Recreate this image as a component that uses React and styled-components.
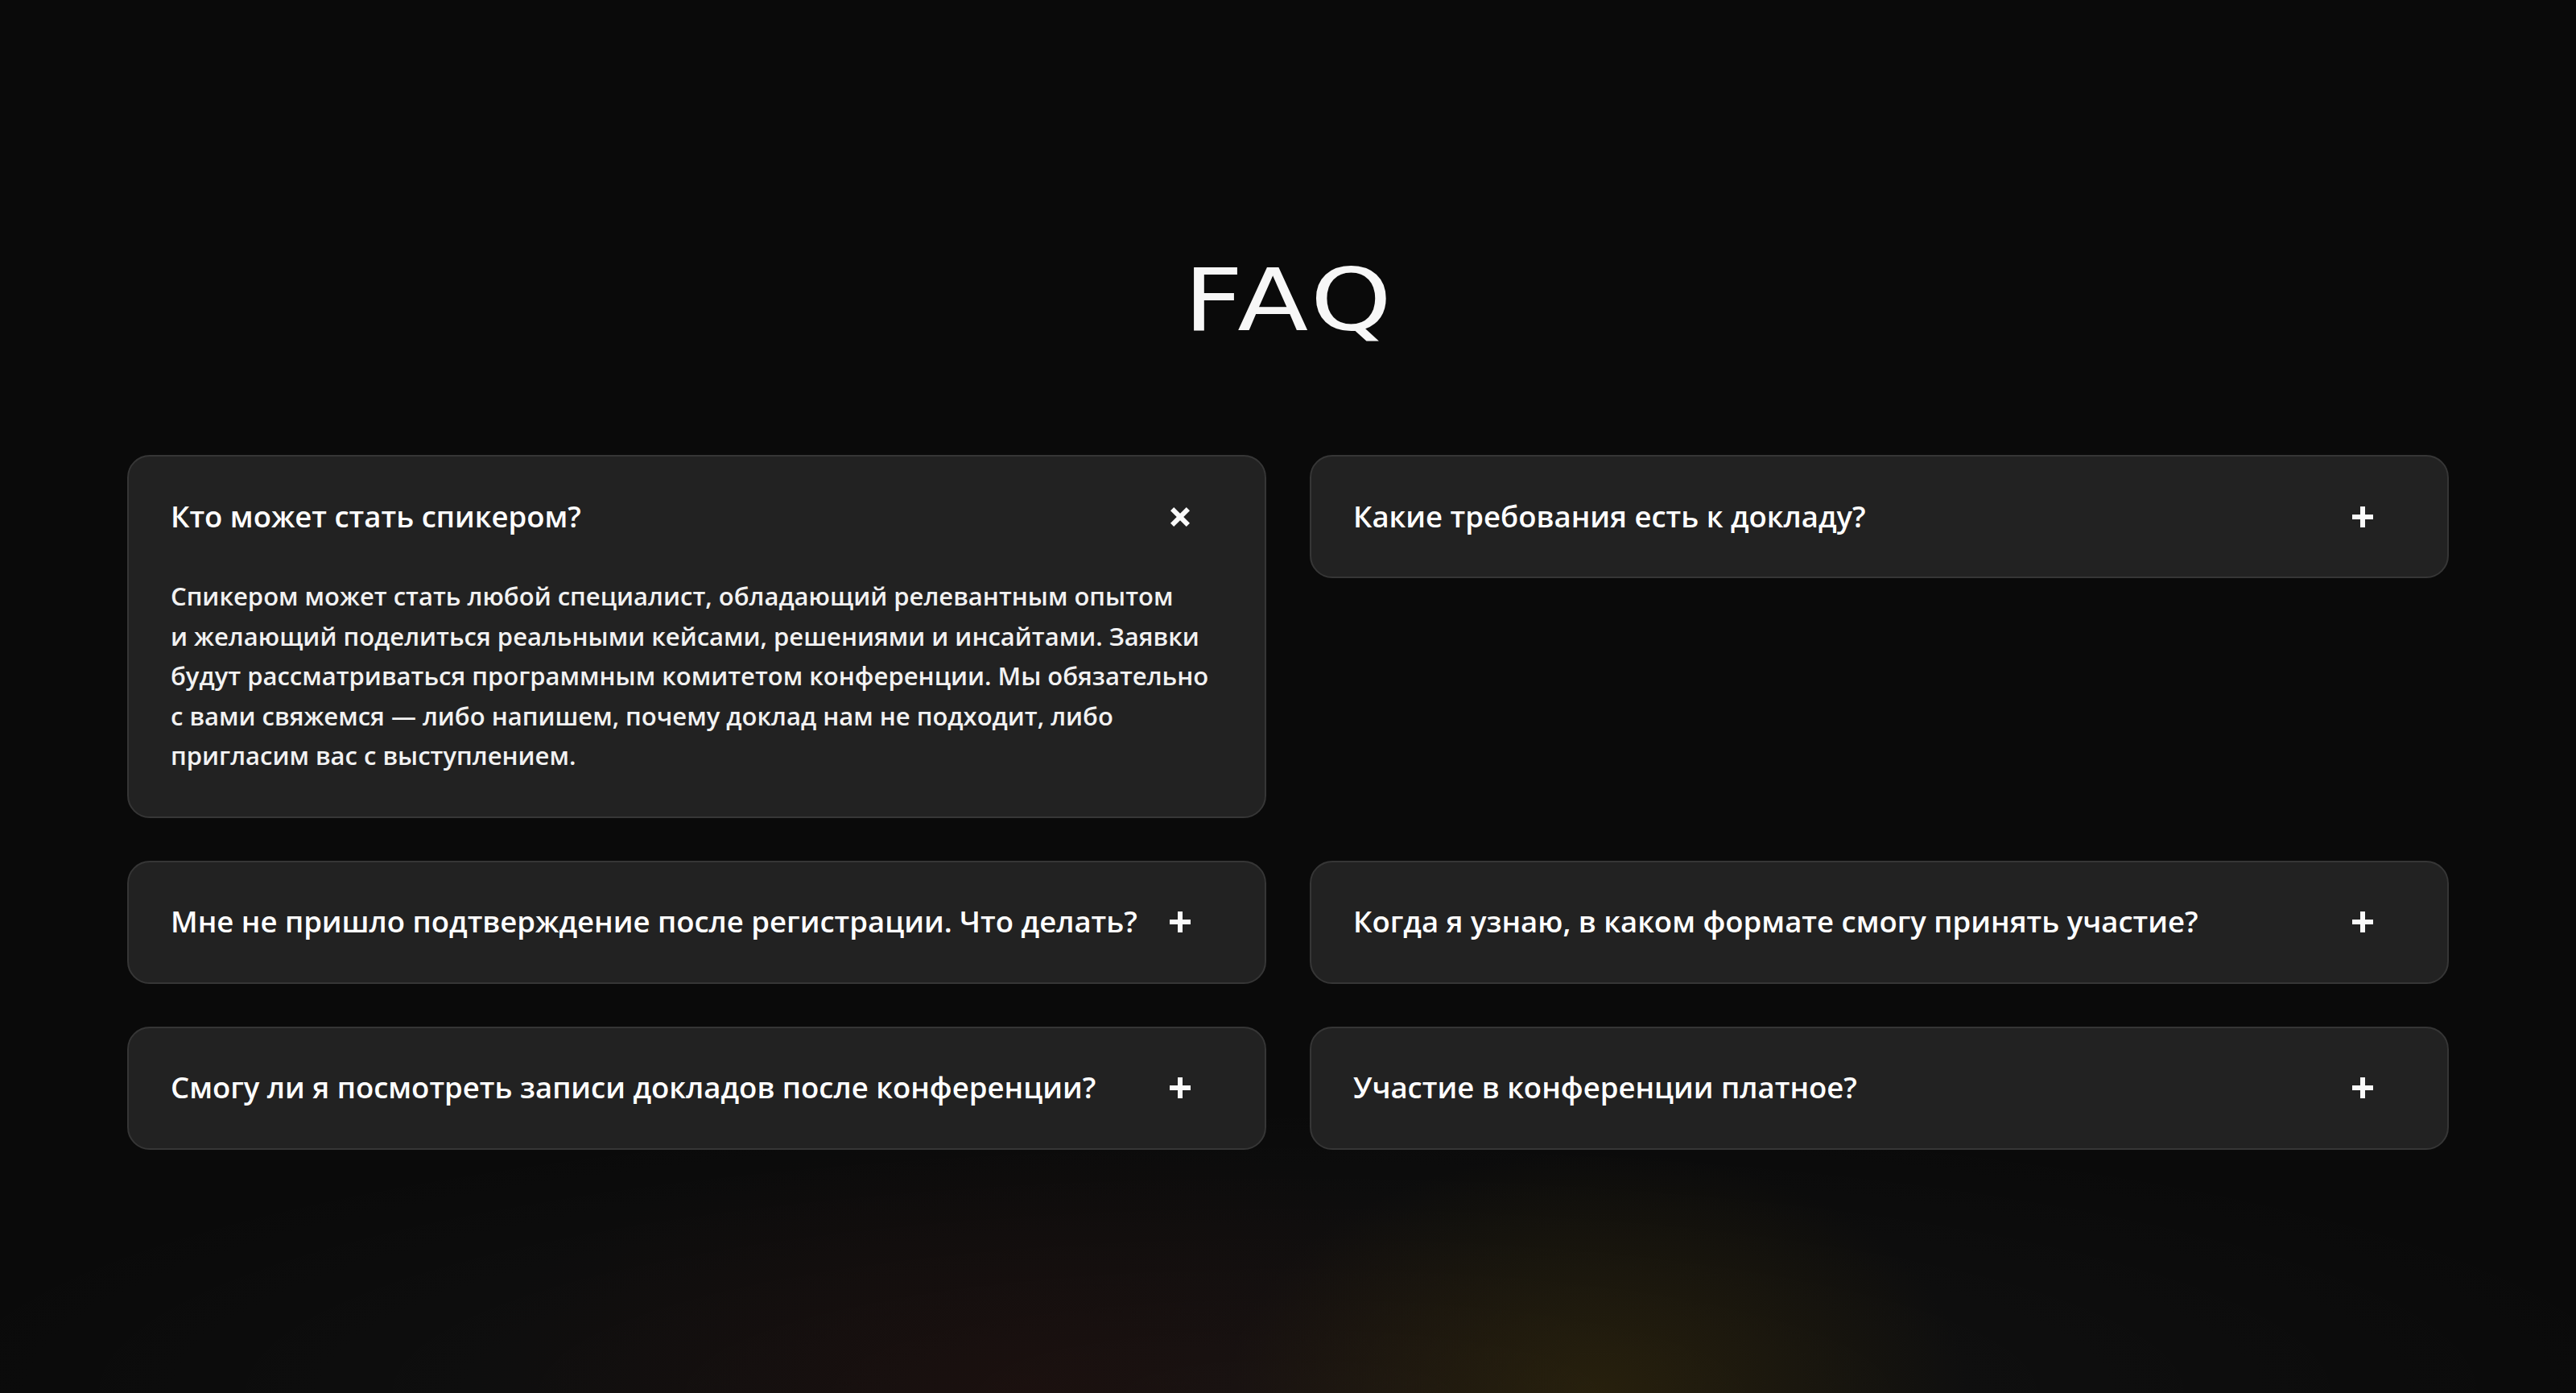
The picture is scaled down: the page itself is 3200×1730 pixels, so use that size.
import React, { useState } from "react";
import styled, { createGlobalStyle } from "styled-components";

const items = [
  {
    q: "Кто может стать спикером?",
    a: "Спикером может стать любой специалист, обладающий релевантным опытом и\u00a0желающий поделиться реальными кейсами, решениями и\u00a0инсайтами. Заявки будут рассматриваться программным комитетом конференции. Мы обязательно с\u00a0вами свяжемся — либо напишем, почему доклад нам не подходит, либо пригласим вас с\u00a0выступлением.",
  },
  {
    q: "Какие требования есть к докладу?",
    a: "Доклад должен быть практическим и основанным на реальном опыте.",
  },
  {
    q: "Мне не пришло подтверждение после регистрации. Что делать?",
    a: "Проверьте папку «Спам» или напишите нам на почту.",
  },
  {
    q: "Когда я узнаю, в каком формате смогу принять участие?",
    a: "Мы сообщим о формате участия заранее.",
  },
  {
    q: "Смогу ли я посмотреть записи докладов после конференции?",
    a: "Да, записи будут доступны участникам после конференции.",
  },
  {
    q: "Участие в конференции платное?",
    a: "Участие в конференции бесплатное.",
  },
];

function Toggle({ open }) {
  return (
    <IconBox>
      <svg width="30" height="30" viewBox="-15 -15 30 30" fill="#fafafa">
        {open ? (
          <g transform="rotate(45)">
            <rect x="-14" y="-3" width="28" height="6" />
            <rect x="-3" y="-14" width="6" height="28" />
          </g>
        ) : (
          <g>
            <rect x="-13" y="-3" width="26" height="6" />
            <rect x="-3" y="-13" width="6" height="26" />
          </g>
        )}
      </svg>
    </IconBox>
  );
}

export default function App() {
  const [open, setOpen] = useState(0);

  return (
    <>
      <GlobalStyle />
      <Page>
        <Title>
          <TitleText>FAQ</TitleText>
        </Title>
        <Grid>
          {items.map((item, i) => (
            <Card key={i}>
              <Header onClick={() => setOpen(open === i ? -1 : i)}>
                <Question>{item.q}</Question>
                <Toggle open={open === i} />
              </Header>
              {open === i && <Answer>{item.a}</Answer>}
            </Card>
          ))}
        </Grid>
      </Page>
    </>
  );
}

const GlobalStyle = createGlobalStyle`
  html, body {
    margin: 0;
    padding: 0;
    background: #0a0a0a;
  }
  * {
    box-sizing: border-box;
  }
`;

const Page = styled.section`
  min-height: 1730px;
  padding: 320px 158px 0;
  background:
    radial-gradient(ellipse 460px 300px at 62% 100%, rgba(72, 54, 6, 0.4), transparent 100%),
    radial-gradient(ellipse 700px 320px at 40% 100%, rgba(42, 14, 10, 0.38), transparent 100%),
    radial-gradient(ellipse 1750px 360px at 50% 100%, rgba(255, 255, 255, 0.04), transparent 100%),
    #0a0a0a;
  font-family: "Open Sans", "Noto Sans", sans-serif;
  color: #fff;
`;

const Title = styled.h2`
  margin: 0 0 138px;
  text-align: center;
  font-family: "DejaVu Sans", sans-serif;
  font-weight: 400;
  font-size: 107px;
  line-height: 1;
  color: #f7f7f7;
`;

const TitleText = styled.span`
  display: inline-block;
  letter-spacing: 4px;
  padding-left: 4px;
  transform: scaleX(1.2);
`;

const Grid = styled.div`
  display: grid;
  grid-template-columns: 1fr 1fr;
  column-gap: 54px;
  row-gap: 53px;
  align-items: start;
`;

const Card = styled.div`
  background: #222222;
  border: 2px solid #363636;
  border-radius: 28px;
  overflow: hidden;
`;

const Header = styled.div`
  height: 149px;
  display: flex;
  align-items: center;
  justify-content: space-between;
  gap: 24px;
  padding: 0 85px 0 52px;
  cursor: pointer;
`;

const Question = styled.div`
  font-size: 36.5px;
  font-weight: 600;
  line-height: 1.3;
  color: #fff;
`;

const IconBox = styled.div`
  flex: 0 0 40px;
  width: 40px;
  height: 40px;
  display: flex;
  align-items: center;
  justify-content: center;
`;

const Answer = styled.p`
  margin: 0;
  padding: 0 40px 50px 52px;
  font-size: 31px;
  font-weight: 600;
  line-height: 49.5px;
  color: #f2f2f2;
`;
